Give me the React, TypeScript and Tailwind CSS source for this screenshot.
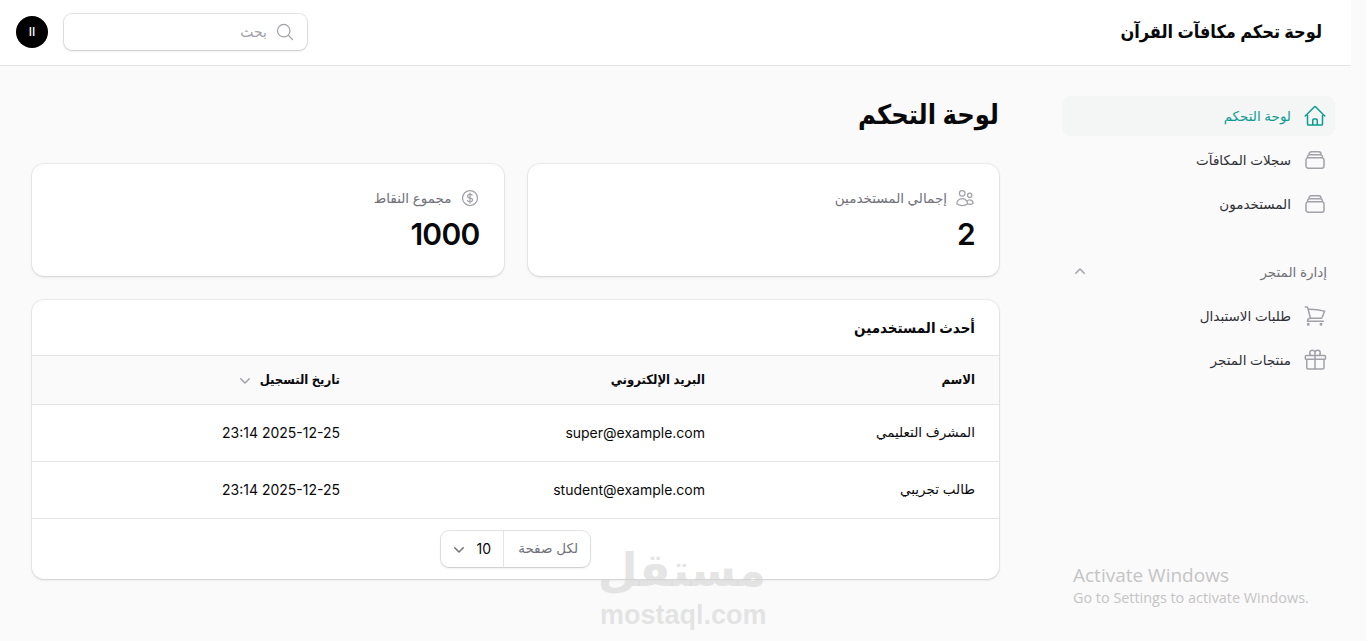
import {
  HiOutlineHome,
  HiOutlineRectangleStack,
  HiOutlineShoppingCart,
  HiOutlineGift,
  HiOutlineUsers,
  HiOutlineCurrencyDollar,
  HiOutlineMagnifyingGlass,
  HiMiniChevronUp,
  HiMiniChevronDown,
} from "react-icons/hi2";
import type { ReactNode } from "react";

const NavItem = ({ icon, label, active }: { icon: ReactNode; label: string; active?: boolean }) => (
  <div
    className={`flex h-10 items-center gap-3 rounded-lg px-2 text-[13.5px] font-medium ${
      active ? "bg-[#f4f5f5] text-[#0d9c90]" : "text-[#2f2f36]"
    }`}
  >
    <span className={active ? "text-[#0d9c90]" : "text-[#a1a1aa]"}>{icon}</span>
    {label}
  </div>
);

const StatCard = ({ icon, label, value }: { icon: ReactNode; label: string; value: string }) => (
  <div className="h-[112px] flex-1 rounded-xl bg-white px-6 pt-6 shadow-sm ring-1 ring-[#09090b]/5">
    <div className="flex items-center gap-2 text-[13.5px] font-medium text-[#71717a]">
      <span className="text-[#a1a1aa]">{icon}</span>
      {label}
    </div>
    <div className="mt-2 text-3xl leading-9 font-semibold tracking-tight text-[#09090b]">{value}</div>
  </div>
);

const rows = [
  { name: "المشرف التعليمي", email: "super@example.com", date: "2025-12-25 23:14" },
  { name: "طالب تجريبي", email: "student@example.com", date: "2025-12-25 23:14" },
];

export default function App() {
  return (
    <div
      dir="rtl"
      className="relative h-screen overflow-hidden bg-[#fafafa] pr-[15px] font-['Inter','DejaVu_Sans',sans-serif]"
    >
      <header className="flex h-[66px] items-center justify-between border-b border-[#e4e4e7] bg-white pr-[29px] pb-px pl-4">
        <div className="-mt-0.5 font-['Inter','DejaVu_Sans_Condensed','DejaVu_Sans',sans-serif] text-[18px] font-bold text-[#09090b]">
          لوحة تحكم مكافآت القرآن
        </div>
        <div className="flex items-center gap-4">
          <div className="flex h-9 w-[243px] items-center gap-2 rounded-lg bg-white px-3 shadow-sm ring-1 ring-[#09090b]/10">
            <HiOutlineMagnifyingGlass className="text-[#a1a1aa]" size={20} />
            <span className="text-sm text-[#a1a1aa]">بحث</span>
          </div>
          <div className="flex size-8 items-center justify-center rounded-full bg-black text-xs font-medium text-white">
            II
          </div>
        </div>
      </header>

      <div className="flex">
        <aside className="w-[289px] shrink-0 pt-[30px] pr-4">
          <nav className="flex flex-col gap-1">
            <NavItem active icon={<HiOutlineHome size={24} />} label="لوحة التحكم" />
            <NavItem icon={<HiOutlineRectangleStack size={24} />} label="سجلات المكافآت" />
            <NavItem icon={<HiOutlineRectangleStack size={24} />} label="المستخدمون" />
          </nav>
          <div className="mt-7 flex h-10 items-center justify-between px-2 text-[13.5px] font-medium text-[#71717a]">
            إدارة المتجر
            <HiMiniChevronUp className="text-[#a1a1aa]" size={20} />
          </div>
          <nav className="mt-1 flex flex-col gap-1">
            <NavItem icon={<HiOutlineShoppingCart size={24} />} label="طلبات الاستبدال" />
            <NavItem icon={<HiOutlineGift size={24} />} label="منتجات المتجر" />
          </nav>
        </aside>

        <main className="flex-1 pt-[31px] pr-[63px] pl-[32px]">
          <h1 className="font-['Inter','DejaVu_Sans_Condensed','DejaVu_Sans',sans-serif] text-[27px] leading-9 font-bold text-[#09090b]">
            لوحة التحكم
          </h1>

          <div className="mt-[31px] flex gap-6">
            <StatCard icon={<HiOutlineUsers size={20} />} label="إجمالي المستخدمين" value="2" />
            <StatCard icon={<HiOutlineCurrencyDollar size={20} />} label="مجموع النقاط" value="1000" />
          </div>

          <section className="mt-6 h-[279px] overflow-hidden rounded-xl bg-white shadow-sm ring-1 ring-[#09090b]/5">
            <div className="flex h-14 items-center border-b border-[#e4e4e7] px-6 font-['Inter','DejaVu_Sans_Condensed','DejaVu_Sans',sans-serif] text-[15px] leading-6 font-semibold text-[#09090b]">
              أحدث المستخدمين
            </div>
            <table className="w-full table-fixed text-sm text-[#09090b]">
              <thead>
                <tr className="h-[48px] border-b border-[#e4e4e7] bg-[#fafafa] text-right font-['Inter','DejaVu_Sans_Condensed','DejaVu_Sans',sans-serif] text-[13px] font-semibold">
                  <th className="w-[270px] pr-6 font-semibold">الاسم</th>
                  <th className="w-[365px] pr-6 font-semibold">البريد الإلكتروني</th>
                  <th className="pr-6 font-semibold">
                    <span className="flex items-center gap-[5px]">
                      تاريخ التسجيل
                      <HiMiniChevronDown className="text-[#a1a1aa]" size={20} />
                    </span>
                  </th>
                </tr>
              </thead>
              <tbody>
                {rows.map((row) => (
                  <tr key={row.email} className="h-[57px] border-b border-[#e4e4e7]">
                    <td className="pr-6 text-[13.5px]">{row.name}</td>
                    <td className="pr-6">{row.email}</td>
                    <td className="pr-6">{row.date}</td>
                  </tr>
                ))}
              </tbody>
            </table>
            <div className="flex justify-center pt-3">
              <div className="flex h-9 w-[149px] items-center rounded-lg bg-white text-sm shadow-sm ring-1 ring-[#09090b]/10">
                <span className="flex h-full w-[87px] items-center border-l border-[#e4e4e7] pr-3 text-[13.5px] whitespace-nowrap text-[#71717a]">
                  لكل صفحة
                </span>
                <span className="flex flex-1 items-center justify-between pr-3 pl-2 text-[#09090b]">
                  10
                  <HiMiniChevronDown className="text-[#71717a]" size={20} />
                </span>
              </div>
            </div>
          </section>
        </main>
      </div>

      {/* watermark */}
      <div className="pointer-events-none absolute top-[540px] left-[600px] w-[166px] text-center font-['DejaVu_Sans',sans-serif] font-bold text-[#d4d4d4]/60">
        <div className="text-[46px] leading-[60px]">مستقل</div>
        <div className="font-['Liberation_Sans',sans-serif] text-[27px] leading-[30px]" dir="ltr">
          mostaql.com
        </div>
      </div>

      {/* windows activation notice */}
      <div dir="ltr" className="pointer-events-none absolute top-[563px] left-[1073px] font-['Open_Sans',sans-serif] text-[#c4c4c4]">
        <div className="text-[19px] leading-6">Activate Windows</div>
        <div className="mt-px text-[14.4px] leading-5">Go to Settings to activate Windows.</div>
      </div>
    </div>
  );
}
